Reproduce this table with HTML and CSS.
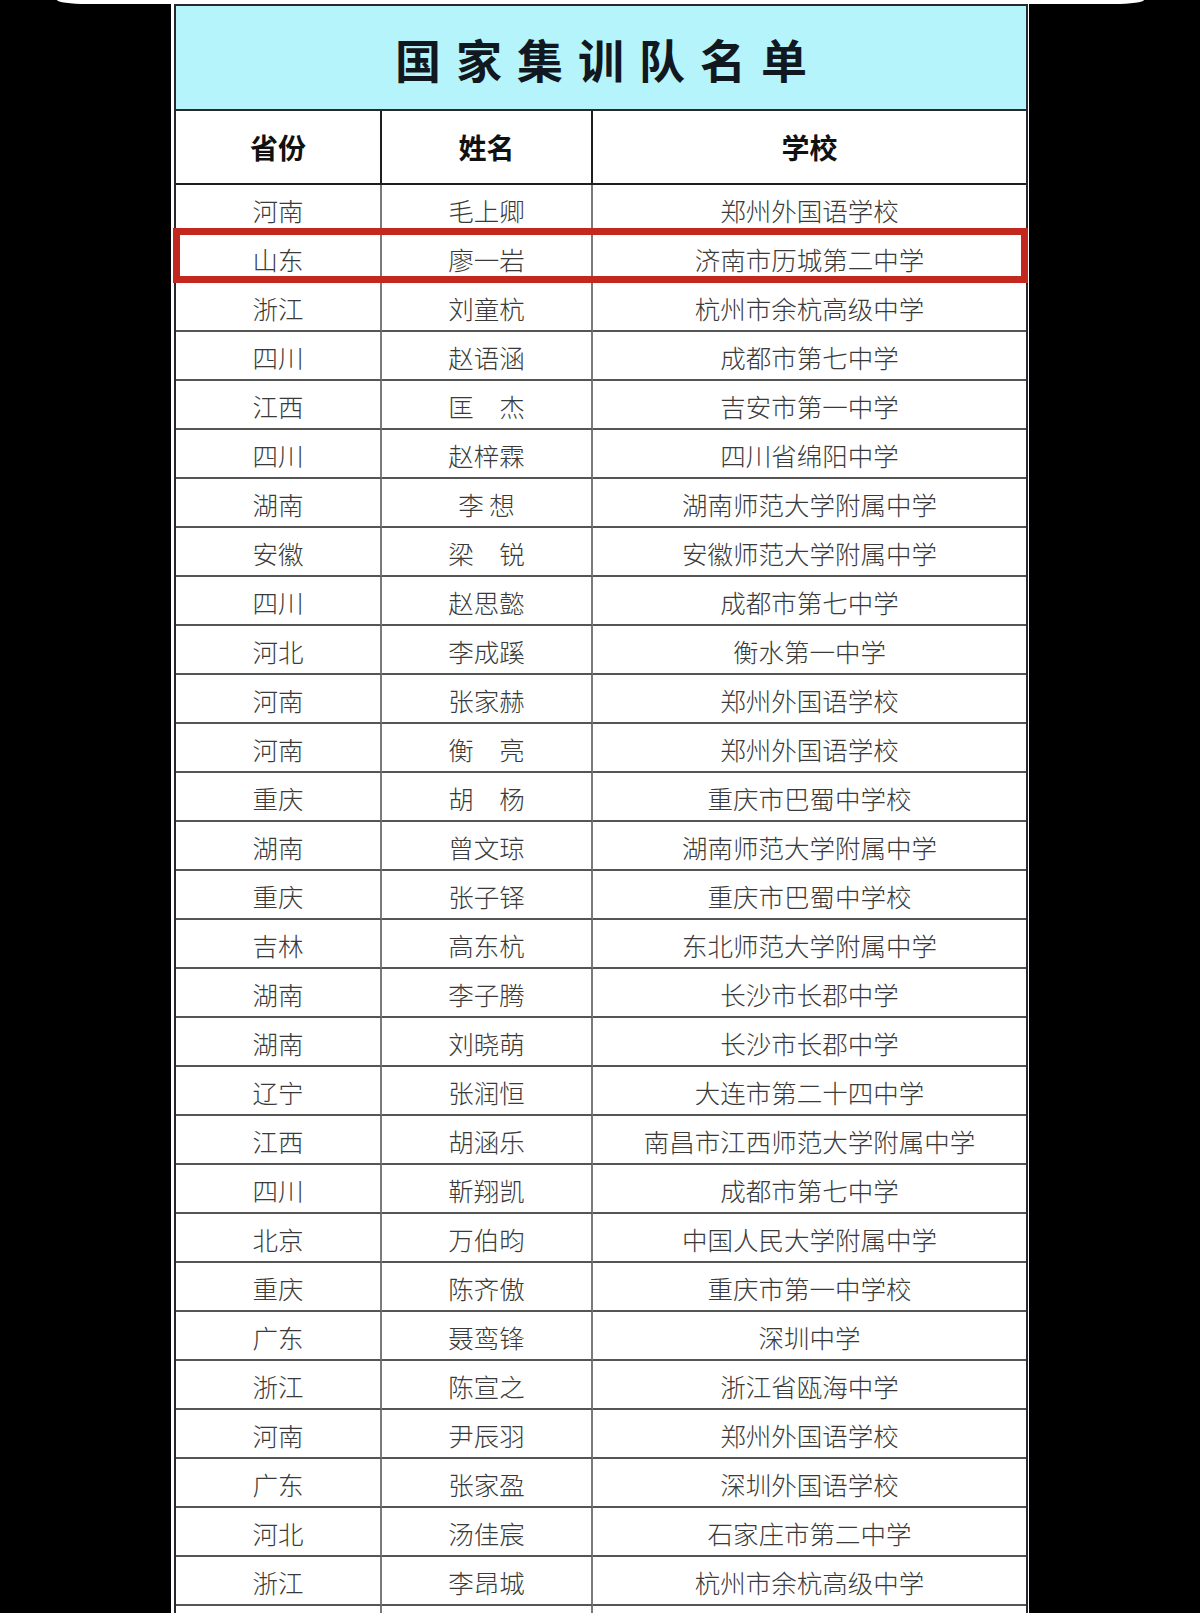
FILE: index.html
```html
<!DOCTYPE html>
<html lang="zh-CN">
<head>
<meta charset="utf-8">
<title>国家集训队名单</title>
<link rel="stylesheet" href="styles.css">
</head>
<body>
<div class="topbar"></div>
<div class="sheet">
  <div class="roster">
    <div class="title">国家集训队名单</div>
    <div class="hd">省份</div><div class="hd">姓名</div><div class="hd">学校</div>
    <div class="c">河南</div><div class="c">毛上卿</div><div class="c">郑州外国语学校</div>
    <div class="c">山东</div><div class="c">廖一岩</div><div class="c">济南市历城第二中学</div>
    <div class="c">浙江</div><div class="c">刘童杭</div><div class="c">杭州市余杭高级中学</div>
    <div class="c">四川</div><div class="c">赵语涵</div><div class="c">成都市第七中学</div>
    <div class="c">江西</div><div class="c">匡　杰</div><div class="c">吉安市第一中学</div>
    <div class="c">四川</div><div class="c">赵梓霖</div><div class="c">四川省绵阳中学</div>
    <div class="c">湖南</div><div class="c">李 想</div><div class="c">湖南师范大学附属中学</div>
    <div class="c">安徽</div><div class="c">梁　锐</div><div class="c">安徽师范大学附属中学</div>
    <div class="c">四川</div><div class="c">赵思懿</div><div class="c">成都市第七中学</div>
    <div class="c">河北</div><div class="c">李成蹊</div><div class="c">衡水第一中学</div>
    <div class="c">河南</div><div class="c">张家赫</div><div class="c">郑州外国语学校</div>
    <div class="c">河南</div><div class="c">衡　亮</div><div class="c">郑州外国语学校</div>
    <div class="c">重庆</div><div class="c">胡　杨</div><div class="c">重庆市巴蜀中学校</div>
    <div class="c">湖南</div><div class="c">曾文琼</div><div class="c">湖南师范大学附属中学</div>
    <div class="c">重庆</div><div class="c">张子铎</div><div class="c">重庆市巴蜀中学校</div>
    <div class="c">吉林</div><div class="c">高东杭</div><div class="c">东北师范大学附属中学</div>
    <div class="c">湖南</div><div class="c">李子腾</div><div class="c">长沙市长郡中学</div>
    <div class="c">湖南</div><div class="c">刘晓萌</div><div class="c">长沙市长郡中学</div>
    <div class="c">辽宁</div><div class="c">张润恒</div><div class="c">大连市第二十四中学</div>
    <div class="c">江西</div><div class="c">胡涵乐</div><div class="c">南昌市江西师范大学附属中学</div>
    <div class="c">四川</div><div class="c">靳翔凯</div><div class="c">成都市第七中学</div>
    <div class="c">北京</div><div class="c">万伯昀</div><div class="c">中国人民大学附属中学</div>
    <div class="c">重庆</div><div class="c">陈齐傲</div><div class="c">重庆市第一中学校</div>
    <div class="c">广东</div><div class="c">聂鸾锋</div><div class="c">深圳中学</div>
    <div class="c">浙江</div><div class="c">陈宣之</div><div class="c">浙江省瓯海中学</div>
    <div class="c">河南</div><div class="c">尹辰羽</div><div class="c">郑州外国语学校</div>
    <div class="c">广东</div><div class="c">张家盈</div><div class="c">深圳外国语学校</div>
    <div class="c">河北</div><div class="c">汤佳宸</div><div class="c">石家庄市第二中学</div>
    <div class="c">浙江</div><div class="c">李昂城</div><div class="c">杭州市余杭高级中学</div>
    <div class="c"></div><div class="c"></div><div class="c"></div>
  </div>
  <div class="highlight"></div>
</div>
</body>
</html>
```
FILE: styles.css
```css
html, body {
  margin: 0;
  padding: 0;
  background: #000;
  height: 1613px;
  overflow: hidden;
}
body {
  font-family: "Noto Sans CJK SC", "Noto Sans", sans-serif;
}
.topbar {
  height: 4px;
  margin: 0 56px 0 57px;
  background: #fff;
  border-radius: 0 0 30px 30px / 0 0 4px 4px;
}
.sheet {
  position: relative;
  width: 858px;
  margin-left: 171px;
  padding: 0 1px 0 3px;
  box-sizing: border-box;
  background: #fff;
}
.roster {
  display: grid;
  grid-template-columns: 206px 211px 433px;
  border: 2px solid #262a2e;
  border-bottom: none;
}
.roster > div {
  box-sizing: border-box;
  display: flex;
  align-items: center;
  justify-content: center;
}
.title {
  grid-column: 1 / -1;
  height: 105px;
  background: #b6f4fb;
  border-bottom: 2px solid #262a2e;
  font-size: 46px;
  font-weight: 700;
  letter-spacing: 15px;
  padding-left: 15px;
  color: #111820;
}
.hd {
  height: 74px;
  border-bottom: 2px solid #1e1e1e;
  border-right: 2px solid #1e1e1e;
  font-size: 28px;
  font-weight: 700;
  color: #111;
}
.c {
  height: 49px;
  border-bottom: 2px solid #555;
  border-right: 2px solid #7a7a7a;
  font-size: 25.5px;
  font-weight: 300;
  color: #3a3a3a;
  padding-top: 2px;
}
.hd:nth-child(4), .c:nth-child(3n+4) {
  border-right: none;
}
.highlight {
  position: absolute;
  left: 2px;
  top: 224px;
  width: 855px;
  height: 55px;
  box-sizing: border-box;
  border: 7px solid #c2281d;
}
```
